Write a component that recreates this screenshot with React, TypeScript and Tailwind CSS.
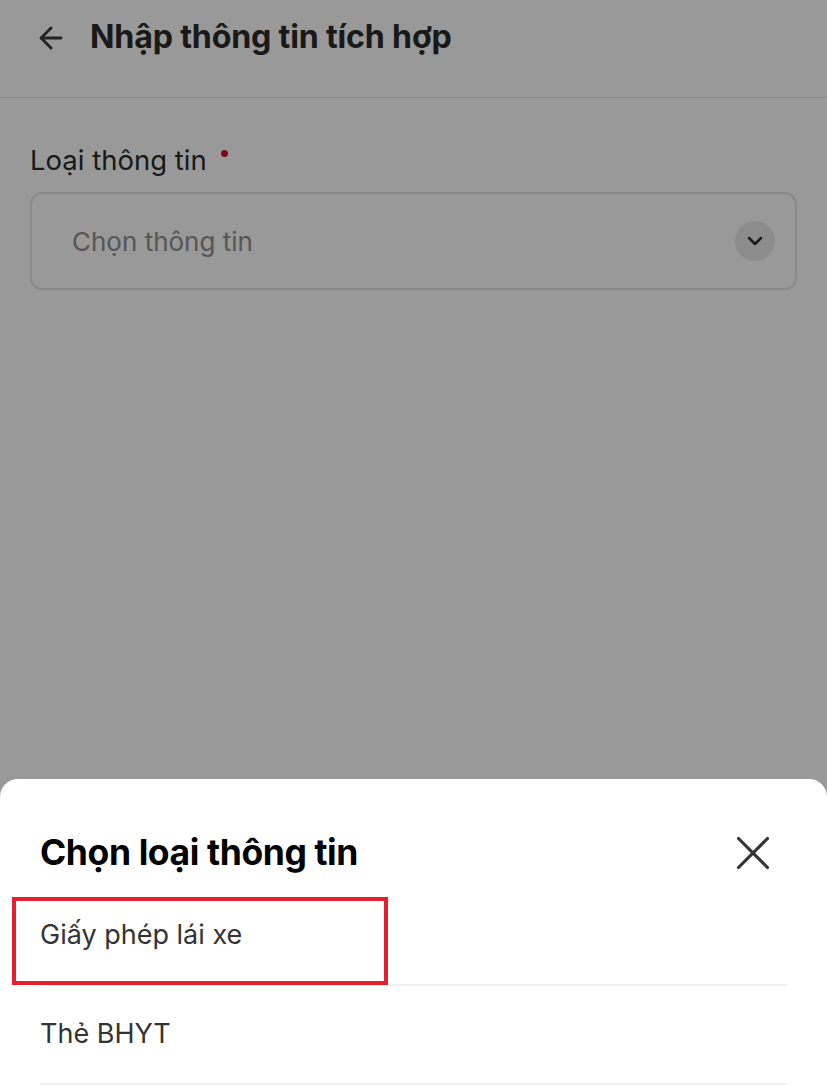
import { ArrowLeft, ChevronDown, X } from "lucide-react"

const font = { fontFamily: "Inter, 'Noto Sans', sans-serif" }

function Header() {
  return (
    <header className="flex h-[98px] items-center gap-[22px] border-b border-[#e6e6e6] px-[34px] pb-[22px]">
      <ArrowLeft className="h-[34px] w-[34px] text-[#3a3a3a]" strokeWidth={2} />
      <h1 className="text-[32.2px] font-bold tracking-[-0.2px] text-[#2b2b2b]">Nhập thông tin tích hợp</h1>
    </header>
  )
}

function SelectField() {
  return (
    <div className="px-[30px] pt-[44px]">
      <label className="flex items-start text-[27.5px] leading-[36px] text-[#2b2b2b]">
        Loại thông tin
        <span className="ml-[14px] mt-[8px] h-[7px] w-[7px] rounded-full bg-[#d0101b]" />
      </label>
      <div className="mt-[14px] flex h-[98px] items-center justify-between rounded-[12px] border-2 border-[#e4e4e4] pl-[40px] pr-[20px]">
        <span className="text-[26px] text-[#8f8f8f]">Chọn thông tin</span>
        <span className="flex h-[40px] w-[40px] items-center justify-center rounded-full bg-[#eaeaea]">
          <ChevronDown className="h-[24px] w-[24px] text-[#2b2b2b]" strokeWidth={2.5} />
        </span>
      </div>
    </div>
  )
}

function BottomSheet() {
  const items = ["Giấy phép lái xe", "Thẻ BHYT"]
  return (
    <div className="absolute inset-x-0 bottom-0 top-[779px] rounded-t-[18px] bg-white">
      <div className="flex h-[108px] items-center justify-between pl-[40px] pr-[45px] pt-[40px]">
        <h2 className="text-[35.5px] font-bold tracking-[-0.4px] text-black">Chọn loại thông tin</h2>
        <X className="h-[58px] w-[58px] text-[#333]" strokeWidth={1.3} />
      </div>
      <ul className="mx-[40px]">
        {items.map((item) => (
          <li
            key={item}
            className="flex h-[99px] items-center border-b-2 border-[#f0f0f0] text-[27px] text-[#333]"
          >
            {item}
          </li>
        ))}
      </ul>
      {/* highlight annotation */}
      <div className="absolute left-[12px] top-[118px] h-[88px] w-[376px] border-4 border-[#e4202e]" />
    </div>
  )
}

export default function App() {
  return (
    <div className="relative h-[1086px] overflow-hidden bg-white" style={font}>
      <Header />
      <SelectField />
      <div className="absolute inset-0 bg-black/40" />
      <BottomSheet />
    </div>
  )
}
